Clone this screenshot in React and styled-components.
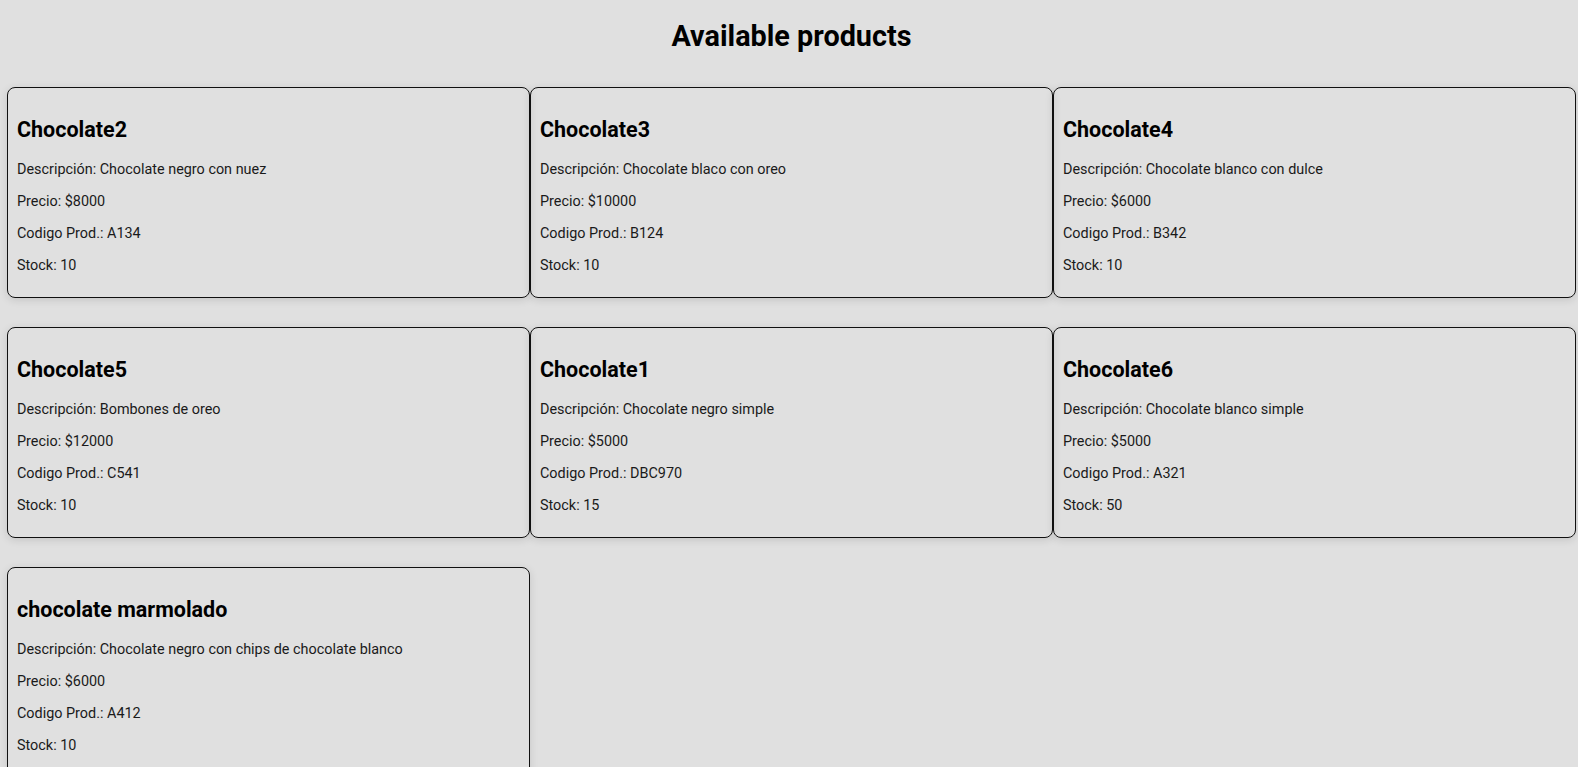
import React from "react";
import styled, { createGlobalStyle } from "styled-components";

const Global = createGlobalStyle`
  html, body { margin: 0; padding: 0; background: #e0e0e0; }
  body { font-family: Roboto, "Noto Sans", sans-serif; color: #111; }
`;

const Page = styled.main`
  padding: 0 2px 0 7px;
`;

const Title = styled.h1`
  margin: 0;
  padding: 19px 0 34px;
  text-align: center;
  font-size: 28.8px;
  font-weight: 700;
  line-height: 34px;
  color: #000;
`;

const Grid = styled.section`
  display: grid;
  grid-template-columns: repeat(3, 523px);
  column-gap: 0;
  row-gap: 29px;
`;

const Card = styled.article`
  border: 1px solid #111;
  border-radius: 8px;
  padding: 9px 9px 8px;
  box-shadow: 0 2px 8px rgba(0, 0, 0, 0.12);
`;

const Name = styled.h2`
  margin: 20px 0 19px;
  font-size: 21.5px;
  font-weight: 700;
  color: #000;
`;

const Line = styled.p`
  margin: 15px 0;
  font-size: 14.4px;
  color: #1a1a1a;
`;

const products = [
  { name: "Chocolate2", desc: "Chocolate negro con nuez", price: 8000, code: "A134", stock: 10 },
  { name: "Chocolate3", desc: "Chocolate blaco con oreo", price: 10000, code: "B124", stock: 10 },
  { name: "Chocolate4", desc: "Chocolate blanco con dulce", price: 6000, code: "B342", stock: 10 },
  { name: "Chocolate5", desc: "Bombones de oreo", price: 12000, code: "C541", stock: 10 },
  { name: "Chocolate1", desc: "Chocolate negro simple", price: 5000, code: "DBC970", stock: 15 },
  { name: "Chocolate6", desc: "Chocolate blanco simple", price: 5000, code: "A321", stock: 50 },
  { name: "chocolate marmolado", desc: "Chocolate negro con chips de chocolate blanco", price: 6000, code: "A412", stock: 10 },
];

export default function App() {
  return (
    <>
      <Global />
      <Page>
        <Title>Available products</Title>
        <Grid>
          {products.map((p) => (
            <Card key={p.name}>
              <Name>{p.name}</Name>
              <Line>Descripción: {p.desc}</Line>
              <Line>Precio: ${p.price}</Line>
              <Line>Codigo Prod.: {p.code}</Line>
              <Line>Stock: {p.stock}</Line>
            </Card>
          ))}
        </Grid>
      </Page>
    </>
  );
}
